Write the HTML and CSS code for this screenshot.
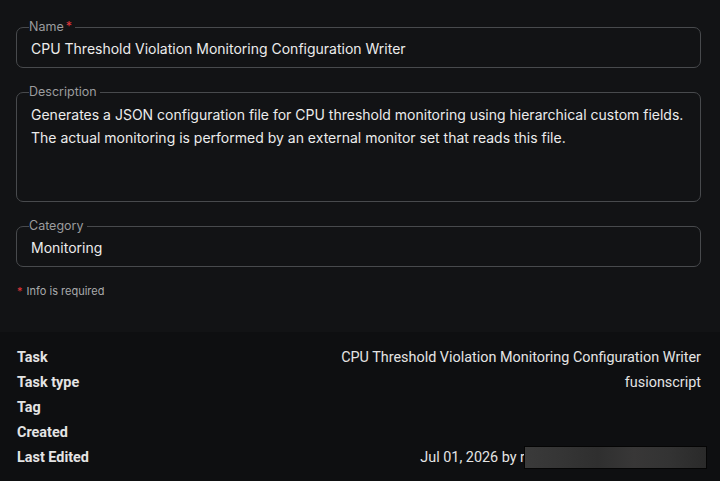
FILE: index.html
```html
<!DOCTYPE html>
<html>
<head>
<meta charset="utf-8">
<link rel="stylesheet" href="styles.css">
</head>
<body>
<div class="page">
  <form class="form">
    <fieldset class="field">
      <legend class="field-label">Name<span class="req">*</span></legend>
      <div class="field-value">CPU Threshold Violation Monitoring Configuration Writer</div>
    </fieldset>
    <fieldset class="field">
      <legend class="field-label">Description</legend>
      <div class="field-value multiline">Generates a JSON configuration file for CPU threshold monitoring using hierarchical custom fields. The actual monitoring is performed by an external monitor set that reads this file.</div>
    </fieldset>
    <fieldset class="field">
      <legend class="field-label">Category</legend>
      <div class="field-value">Monitoring</div>
    </fieldset>
    <p class="note"><span class="req">*</span> Info is required</p>
  </form>
  <section class="details">
    <div class="row"><span class="key">Task</span><span class="val">CPU Threshold Violation Monitoring Configuration Writer</span></div>
    <div class="row"><span class="key">Task type</span><span class="val">fusionscript</span></div>
    <div class="row"><span class="key">Tag</span><span class="val"></span></div>
    <div class="row"><span class="key">Created</span><span class="val"></span></div>
    <div class="row"><span class="key">Last Edited</span><span class="val">Jul 01, 2026 by r<span class="redacted"></span></span></div>
  </section>
</div>
</body>
</html>
```

FILE: styles.css
```css
html, body {
  margin: 0;
  padding: 0;
  background: #121315;
}
.page {
  width: 720px;
  height: 481px;
  display: flex;
  flex-direction: column;
  overflow: hidden;
}
.form {
  display: flex;
  flex-direction: column;
  gap: 18px;
  padding: 21px 19px 0 16px;
  height: 311px;
  box-sizing: border-box;
}
.field {
  margin: 0;
  padding: 0 14px 0 14px;
  min-width: 0;
  border: 1px solid #484a4d;
  border-radius: 7px;
}
.field-label {
  padding: 0 3px 0 0;
  margin-left: -2px;
  font-family: Inter, "Noto Sans", sans-serif;
  font-size: 12.5px;
  line-height: 12px;
  color: #9b9c9e;
}
.req {
  color: #e2363a;
  margin-left: 2px;
}
.field-value {
  padding: 5px 0 7px 0;
  font-family: Inter, "Noto Sans", sans-serif;
  font-size: 14px;
  line-height: 22px;
  color: #ececec;
}
.multiline {
  line-height: 23px;
  height: 91px;
}
.note {
  margin: -1px 0 0 1px;
  font-family: Inter, "Noto Sans", sans-serif;
  font-size: 11px;
  line-height: 14px;
  color: #a9aaac;
}
.note .req {
  margin: 0 1px 0 0;
}
.details {
  flex: 1;
  background: #0e0f11;
  margin-top: 21px;
  padding: 13px 19px 0 17px;
  display: flex;
  flex-direction: column;
}
.row {
  display: flex;
  justify-content: space-between;
  align-items: center;
  height: 25px;
  font-family: Roboto, "Liberation Sans", sans-serif;
  font-size: 14.4px;
  color: #e4e4e4;
}
.key {
  font-weight: 700;
}
.val {
  display: flex;
  align-items: center;
}
.redacted {
  display: inline-block;
  width: 181px;
  height: 21px;
  margin-left: -1px;
  margin-right: -6px;
  border: 1px solid #050505;
  background: linear-gradient(90deg, #3a3a3a 0%, #353535 20%, #2f2f2f 40%, #383737 60%, #333 80%, #2a2a2a 100%);
}
```
